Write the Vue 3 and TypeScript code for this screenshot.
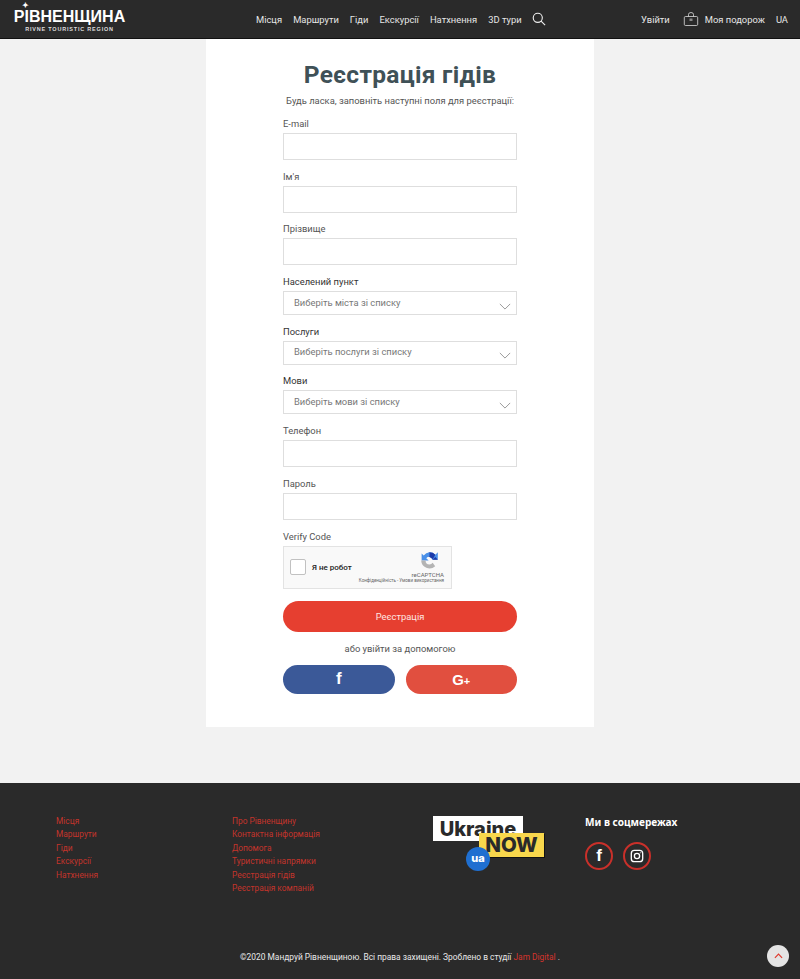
<template>
  <div class="page">
    <header class="topbar">
      <a class="logo">
        <span class="logo-name"><i class="logo-star">✦</i>РІВНЕНЩИНА</span>
        <span class="logo-sub">RIVNE TOURISTIC REGION</span>
      </a>
      <nav class="nav">
        <a v-for="item in navItems" :key="item">{{ item }}</a>
        <svg class="search" viewBox="0 0 16 16">
          <circle cx="6.6" cy="6.6" r="5.2" />
          <path d="M10.4 10.4L15 15" />
        </svg>
      </nav>
      <div class="top-right">
        <a>Увійти</a>
        <a class="trip">
          <svg viewBox="0 0 16 16">
            <path d="M2.5 5.5h11q1.2 0 1.2 1.2v6.6q0 1.2-1.2 1.2h-11q-1.2 0-1.2-1.2V6.700q0-1.200 1.200-1.200z" />
            <path d="M5.500 5.500V3.500q0-2 2.500-2t2.500 2v2" />
            <rect x="6.500" y="7.500" width="3" height="2.500" class="dot" />
          </svg>
          Моя подорож
        </a>
        <a class="lang">UA</a>
      </div>
    </header>

    <main class="content">
      <section class="card">
        <h1>Реєстрація гідів</h1>
        <p class="lead">Будь ласка, заповніть наступні поля для реєстрації:</p>
        <form class="form" @submit.prevent>
          <div v-for="field in fields" :key="field.label" class="field" :class="{ 'field-select': field.placeholder }">
            <label>{{ field.label }}</label>
            <div v-if="field.placeholder" class="select">
              <span>{{ field.placeholder }}</span>
              <svg viewBox="0 0 14 8"><path d="M1 1l6 6 6-6" /></svg>
            </div>
            <input v-else type="text" />
          </div>

          <label class="verify-label">Verify Code</label>
          <div class="captcha">
            <span class="check"></span>
            <span class="robot">Я не робот</span>
            <div class="captcha-brand">
              <svg viewBox="0 0 24 24">
                <path class="c-blue" d="M12 2.500a9.500 9.500 0 0 1 6.700 2.800L21.500 2.500V11h-6.200v-.2A4.300 4.300 0 0 0 12 7.500z" />
                <path class="c-dark" d="M15.300 11h6.200l-2.800-3L16 10.500 11 7.500 8 5.500 12 2.500q4 0 6.700 2.800z" />
                <path class="c-mid" d="M12 2.500v5a4.500 4.500 0 0 0-3.700 2L11 12H3V4l2.400 2.400A9.500 9.500 0 0 1 12 2.500z" />
                <path class="c-grey" d="M2.500 12h5A4.500 4.500 0 0 0 12 16.500a4.500 4.500 0 0 0 3.600-1.800L18.500 18.500A9.500 9.500 0 0 1 2.500 12z" />
              </svg>
              <span class="brand-name">reCAPTCHA</span>
              <span class="brand-links">Конфіденційність - Умови використання</span>
            </div>
          </div>

          <button class="submit" type="submit">Реєстрація</button>
          <p class="alt">або увійти за допомогою</p>
          <div class="socials">
            <button class="soc fb" type="button">f</button>
            <button class="soc gp" type="button">G<small>+</small></button>
          </div>
        </form>
      </section>
    </main>

    <footer class="footer">
      <div class="footer-top">
        <ul class="links col-one">
          <li v-for="item in footerOne" :key="item">{{ item }}</li>
        </ul>
        <ul class="links col-two">
          <li v-for="item in footerTwo" :key="item">{{ item }}</li>
        </ul>
        <div class="now">
          <span class="now-ukraine">Ukraine</span>
          <span class="now-now">NOW</span>
          <span class="now-ua">ua</span>
        </div>
        <div class="follow">
          <h4>Ми в соцмережах</h4>
          <div class="follow-icons">
            <a class="ring"><span>f</span></a>
            <a class="ring">
              <svg viewBox="0 0 16 16">
                <rect x="1.500" y="1.500" width="13" height="13" rx="3.500" />
                <circle cx="8" cy="8" r="3" />
                <circle cx="11.800" cy="4.200" r=".6" class="ig-dot" />
              </svg>
            </a>
          </div>
        </div>
      </div>
      <div class="copyright">
        <span>©2020 Мандруй Рівненщиною. Всі права захищені. Зроблено в студії <a>Jam Digital</a> .</span>
        <button class="to-top" type="button">
          <svg viewBox="0 0 10 6"><path d="M1 5l4-4 4 4" /></svg>
        </button>
      </div>
    </footer>
  </div>
</template>

<script setup lang="ts">
interface Field {
  label: string
  placeholder?: string
}

const navItems = ['Місця', 'Маршрути', 'Гіди', 'Екскурсії', 'Натхнення', '3D тури']

const fields: Field[] = [
  { label: 'E-mail' },
  { label: "Ім'я" },
  { label: 'Прізвище' },
  { label: 'Населений пункт', placeholder: 'Виберіть міста зі списку' },
  { label: 'Послуги', placeholder: 'Виберіть послуги зі списку' },
  { label: 'Мови', placeholder: 'Виберіть мови зі списку' },
  { label: 'Телефон' },
  { label: 'Пароль' }
]

const footerOne = ['Місця', 'Маршрути', 'Гіди', 'Екскурсії', 'Натхнення']
const footerTwo = [
  'Про Рівненщину',
  'Контактна інформація',
  'Допомога',
  'Туристичні напрямки',
  'Реєстрація гідів',
  'Реєстрація компаній'
]
</script>

<style>
html,
body {
  margin: 0;
  background: #f2f2f2;
}
</style>

<style scoped>
.page {
  width: 800px;
  height: 979px;
  display: flex;
  flex-direction: column;
  overflow: hidden;
  font-family: Roboto, "Noto Sans", sans-serif;
  font-size: 9.400px;
  color: #4a4f52;
}

.topbar {
  height: 38px;
  flex: none;
  display: flex;
  align-items: center;
  background: #2a2a2a;
  border-bottom: 1px solid #111;
  color: #e6e6e6;
}

.logo {
  width: 111px;
  margin-left: 14px;
  display: flex;
  flex-direction: column;
  align-items: center;
  color: #fff;
}

.logo-name {
  position: relative;
  font-family: "Liberation Sans", sans-serif;
  font-size: 16px;
  font-weight: 700;
  line-height: 15px;
  white-space: nowrap;
  margin-top: 3px;
}

.logo-star {
  position: absolute;
  left: 8px;
  top: -7px;
  font-size: 8px;
  font-style: normal;
  line-height: 8px;
}

.logo-sub {
  font-family: "Liberation Sans", sans-serif;
  font-size: 5.500px;
  font-weight: 700;
  line-height: 7px;
  letter-spacing: .8px;
  margin-top: 2px;
  color: #ddd;
  white-space: nowrap;
}

.nav {
  display: flex;
  align-items: center;
  gap: 11px;
  margin-left: 131px;
  white-space: nowrap;
}

.search {
  width: 14px;
  height: 14px;
  margin-left: -1px;
  fill: none;
  stroke: #eee;
  stroke-width: 1.300;
}

.top-right {
  margin-left: auto;
  display: flex;
  align-items: center;
  padding-right: 12px;
  white-space: nowrap;
}

.trip {
  display: flex;
  align-items: center;
  gap: 6px;
  margin-left: 13px;
}

.trip svg {
  width: 16px;
  height: 16px;
  fill: none;
  stroke: #ddd;
  stroke-width: .8;
}

.trip .dot {
  fill: #888;
  stroke: none;
}

.lang {
  margin-left: 11px;
}

.content {
  flex: 1;
  display: flex;
  justify-content: center;
  align-items: flex-start;
}

.card {
  width: 388px;
  height: 688px;
  background: #fff;
  display: flex;
  flex-direction: column;
  align-items: center;
}

h1 {
  margin: 21px 0 0;
  font-size: 24.500px;
  line-height: 30px;
  font-weight: 700;
  color: #3f5157;
  letter-spacing: .3px;
}

.lead {
  margin: 4px 0 0;
  line-height: 14px;
  color: #555;
}

.form {
  width: 234px;
  margin-top: 8px;
  display: flex;
  flex-direction: column;
}

.field {
  display: flex;
  flex-direction: column;
  margin-bottom: 8.700px;
}

.field label,
.verify-label {
  line-height: 16px;
  height: 14px;
  margin-bottom: 3px;
  color: #555;
}

.field-select label {
  color: #333;
}

input {
  height: 27px;
  box-sizing: border-box;
  border: 1px solid #dedede;
  background: #fff;
  padding: 0 10px;
  outline: none;
}

.select {
  height: 24px;
  box-sizing: border-box;
  border: 1px solid #dedede;
  display: flex;
  align-items: center;
  justify-content: space-between;
  padding: 0 5px 0 10px;
  color: #777;
}

.select span {
  padding-bottom: 2px;
}

.select svg {
  width: 12px;
  height: 7px;
  margin-top: 6px;
  fill: none;
  stroke: #8a8a8a;
  stroke-width: 1;
}

.captcha {
  width: 169px;
  height: 43px;
  box-sizing: border-box;
  border: 1px solid #e3e3e3;
  background: #f9f9f9;
  display: flex;
  align-items: center;
  padding: 0 7px 0 6px;
}

.check {
  width: 16px;
  height: 16px;
  box-sizing: border-box;
  border: 1px solid #c1c1c1;
  border-radius: 2px;
  background: #fff;
  flex: none;
}

.robot {
  margin-left: 6px;
  font-size: 8px;
  font-weight: 500;
  color: #222;
}

.captcha-brand {
  margin-left: auto;
  display: flex;
  flex-direction: column;
  align-items: flex-end;
  color: #666;
}

.captcha-brand svg {
  width: 21px;
  height: 21px;
  margin-right: 4px;
}

.c-blue {
  fill: #4a90e8;
}

.c-dark {
  fill: #1c3aa9;
}

.c-mid {
  fill: #4a90e8;
}

.c-grey {
  fill: #b4b4b4;
}

.brand-name {
  font-size: 6px;
  line-height: 7px;
}

.brand-links {
  font-size: 4.500px;
  line-height: 6px;
  white-space: nowrap;
}

.submit {
  height: 31px;
  margin-top: 12.500px;
  border: 0;
  border-radius: 16px;
  background: #e63f30;
  color: #ffe6e2;
  font: inherit;
}

.alt {
  margin: 9.500px 0 9px;
  line-height: 14px;
  text-align: center;
  color: #555;
}

.socials {
  display: flex;
  gap: 11px;
}

.soc {
  flex: 1;
  height: 29px;
  padding: 0;
  border: 0;
  border-radius: 15px;
  color: #fff;
  font-weight: 700;
  font-family: "Liberation Sans", sans-serif;
  font-size: 17px;
}

.fb {
  background: #3b5998;
}

.gp {
  background: #e14f3f;
  font-size: 15px;
}

.gp small {
  font-size: 11px;
}

.footer {
  height: 196px;
  flex: none;
  background: #2a2a2a;
  display: flex;
  flex-direction: column;
}

.footer-top {
  display: flex;
  align-items: flex-start;
  padding: 31px 0 0 56px;
  height: 133px;
  box-sizing: border-box;
}

.links {
  list-style: none;
  margin: 1px 0 0;
  padding: 0;
  color: #c4342b;
  font-size: 8.350px;
  line-height: 13.400px;
  white-space: nowrap;
}

.col-one {
  width: 176px;
}

.col-two {
  width: 201px;
}

.now {
  position: relative;
  width: 111px;
  height: 56px;
  margin-top: 2px;
  flex: none;
}

.now-ukraine {
  position: absolute;
  left: 0;
  top: 0;
  width: 90px;
  height: 25px;
  background: #fff;
  color: #2a2a2a;
  font-family: Inter, sans-serif;
  font-size: 20px;
  font-weight: 800;
  line-height: 27px;
  text-align: center;
  overflow: hidden;
}

.now-now {
  position: absolute;
  left: 46px;
  top: 17px;
  width: 65px;
  height: 24px;
  background: #f8d74c;
  box-shadow: 1px 1px 0 #111;
  color: #2a2a2a;
  font-family: Inter, sans-serif;
  font-size: 20.500px;
  font-weight: 800;
  line-height: 24px;
  text-align: center;
}

.now-ua {
  position: absolute;
  left: 33px;
  top: 31px;
  width: 24px;
  height: 24px;
  border-radius: 50%;
  background: #1f6fd0;
  color: #fff;
  font-family: Inter, sans-serif;
  font-size: 11px;
  font-weight: 800;
  line-height: 22px;
  text-align: center;
}

.follow {
  margin-left: 41px;
  flex: none;
}

.follow h4 {
  margin: 0;
  color: #fff;
  font-family: "Noto Sans", sans-serif;
  font-size: 10.100px;
  font-weight: 700;
  line-height: 16px;
}

.follow-icons {
  display: flex;
  gap: 10px;
  margin-top: 12px;
}

.ring {
  width: 28px;
  height: 28px;
  box-sizing: border-box;
  border: 2px solid #c9302a;
  border-radius: 50%;
  display: flex;
  align-items: center;
  justify-content: center;
  color: #fff;
  font-family: "Liberation Sans", sans-serif;
  font-weight: 700;
  font-size: 17px;
}

.ring svg {
  width: 14px;
  height: 14px;
  fill: none;
  stroke: #fff;
  stroke-width: 1.500;
}

.ring .ig-dot {
  fill: #fff;
  stroke: none;
}

.copyright {
  position: relative;
  flex: 1;
  display: flex;
  align-items: center;
  justify-content: center;
  color: #e8e8e8;
  font-size: 8.400px;
  white-space: pre;
  padding-top: 18px;
}

.copyright a {
  color: #d5342c;
}

.to-top {
  position: absolute;
  left: 767px;
  top: 29px;
  width: 22px;
  height: 22px;
  padding: 0;
  border: 0;
  border-radius: 50%;
  background: #e4e4e4;
  display: flex;
  align-items: center;
  justify-content: center;
}

.to-top svg {
  width: 9px;
  height: 6px;
  fill: none;
  stroke: #e0392c;
  stroke-width: 1.300;
}
</style>
